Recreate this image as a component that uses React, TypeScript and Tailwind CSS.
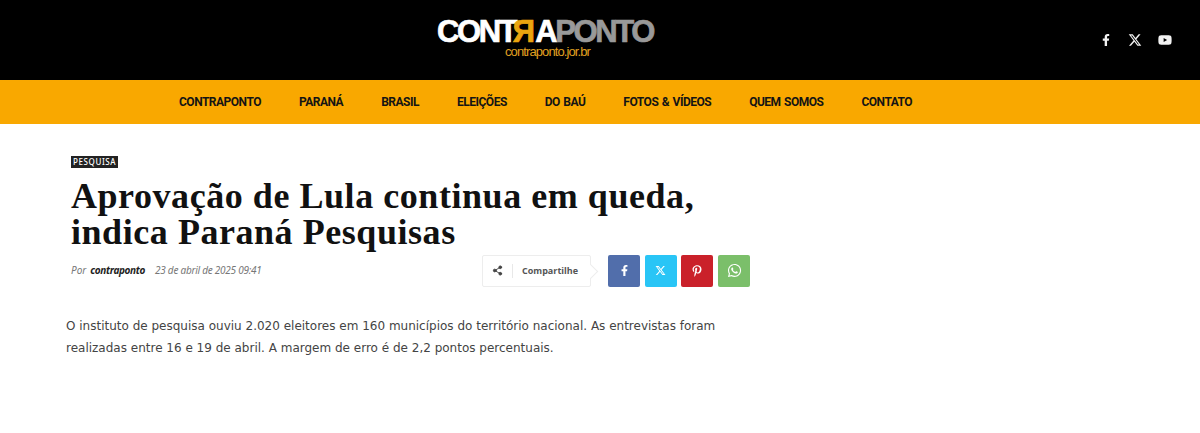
import { Share2 } from 'lucide-react';
import { FaFacebookF, FaPinterestP, FaWhatsapp, FaYoutube } from 'react-icons/fa';
import { FaXTwitter } from 'react-icons/fa6';

const navItems = ['CONTRAPONTO', 'PARANÁ', 'BRASIL', 'ELEIÇÕES', 'DO BAÚ', 'FOTOS & VÍDEOS', 'QUEM SOMOS', 'CONTATO'];

export default function App() {
  return (
    <div className="w-[1200px] h-[433px] overflow-hidden bg-white">
      {/* Header */}
      <header className="h-[80px] bg-black flex items-start pl-[437px]">
        <div className="flex flex-col items-end pt-[19px] w-[216px]">
          <div className="flex font-['Liberation_Sans',sans-serif] font-bold text-[31px] leading-[26px] tracking-[-2.4px] [-webkit-text-stroke:0.7px]">
            <span className="text-white">CONT</span>
            <span className="text-[#eaa50f] -scale-x-100 inline-block">R</span>
            <span className="text-white">A</span>
            <span className="text-[#999999]">PONTO</span>
          </div>
          <span className="mr-[63px] font-['Liberation_Sans',sans-serif] text-[13px] leading-[14px] tracking-[-0.9px] text-[#e0a020]">contraponto.jor.br</span>
        </div>
        <div className="ml-auto flex items-center gap-[16px] text-[#f2f2f2] pt-[33px] pr-[28px]">
          <FaFacebookF className="w-[12px] h-[12px]" />
          <FaXTwitter className="w-[14px] h-[14px]" />
          <FaYoutube className="w-[14px] h-[14px]" />
        </div>
      </header>

      {/* Nav */}
      <nav className="h-[44px] bg-[#f9a800] flex items-center gap-[38px] pl-[179px]">
        {navItems.map((item) => (
          <a key={item} className="font-['Roboto',sans-serif] font-bold text-[12px] tracking-[-0.5px] [word-spacing:1px] text-[#141414]">{item}</a>
        ))}
      </nav>

      {/* Article */}
      <main className="pl-[66px] w-[684px] box-content">
        <div className="pl-[5px] pt-[32px]">
          <span className="block w-fit h-[12px] bg-[#222222] px-[2px] font-['Noto_Sans',sans-serif] font-medium text-[8px] leading-[12px] tracking-[0.6px] text-white">PESQUISA</span>
          <h1 className="mt-[10px] font-['Liberation_Serif',serif] font-bold text-[36px] leading-[36px] tracking-[0.55px] text-[#111111]">
            Aprovação de Lula continua em queda,<br />indica Paraná Pesquisas
          </h1>
          <div className="mt-[4px] flex items-center h-[33px]">
            <span className="font-['Noto_Sans',sans-serif] italic text-[10px] text-[#777777]">Por</span>
            <span className="ml-[4px] font-['Noto_Sans',sans-serif] italic font-bold text-[10px] tracking-[-0.35px] text-[#222222]">contraponto</span>
            <span className="ml-[10px] font-['Noto_Sans',sans-serif] italic text-[10px] tracking-[-0.25px] text-[#777777]">23 de abril de 2025 09:41</span>
            <div className="ml-auto flex items-center">
              <div className="relative flex items-center h-[32px] w-[109px] border border-[#ededed] rounded-[2px] mr-[17px]">
                <Share2 className="w-[11px] h-[11px] ml-[9px] text-[#444444]" fill="#444444" />
                <span className="ml-[9px] h-[14px] border-l border-[#e8e8e8]" />
                <span className="ml-[9px] font-['Open_Sans',sans-serif] font-bold text-[9px] text-[#555555]">Compartilhe</span>
                <span className="absolute right-[-6px] top-[10px] w-[11px] h-[11px] rotate-45 bg-white border-t border-r border-[#ededed]" />
              </div>
              <div className="flex gap-[4.67px]">
                <span className="w-[32px] h-[32px] rounded-[2px] bg-[#516eab] flex items-center justify-center text-white"><FaFacebookF className="w-[11px] h-[11px]" /></span>
                <span className="w-[32px] h-[32px] rounded-[2px] bg-[#29c5f6] flex items-center justify-center text-white"><FaXTwitter className="w-[11px] h-[11px]" /></span>
                <span className="w-[32px] h-[32px] rounded-[2px] bg-[#ca212a] flex items-center justify-center text-white"><FaPinterestP className="w-[12px] h-[12px]" /></span>
                <span className="w-[32px] h-[32px] rounded-[2px] bg-[#7bbf6a] flex items-center justify-center text-white"><FaWhatsapp className="w-[15px] h-[15px]" /></span>
              </div>
            </div>
          </div>
        </div>
        <p className="mt-[28px] w-[680px] font-['DejaVu_Sans',sans-serif] text-[12px] leading-[22px] text-[#444444]">
          O instituto de pesquisa ouviu 2.020 eleitores em 160 municípios do território nacional. As entrevistas foram realizadas entre 16 e 19 de abril. A margem de erro é de 2,2 pontos percentuais.
        </p>
      </main>
    </div>
  );
}
